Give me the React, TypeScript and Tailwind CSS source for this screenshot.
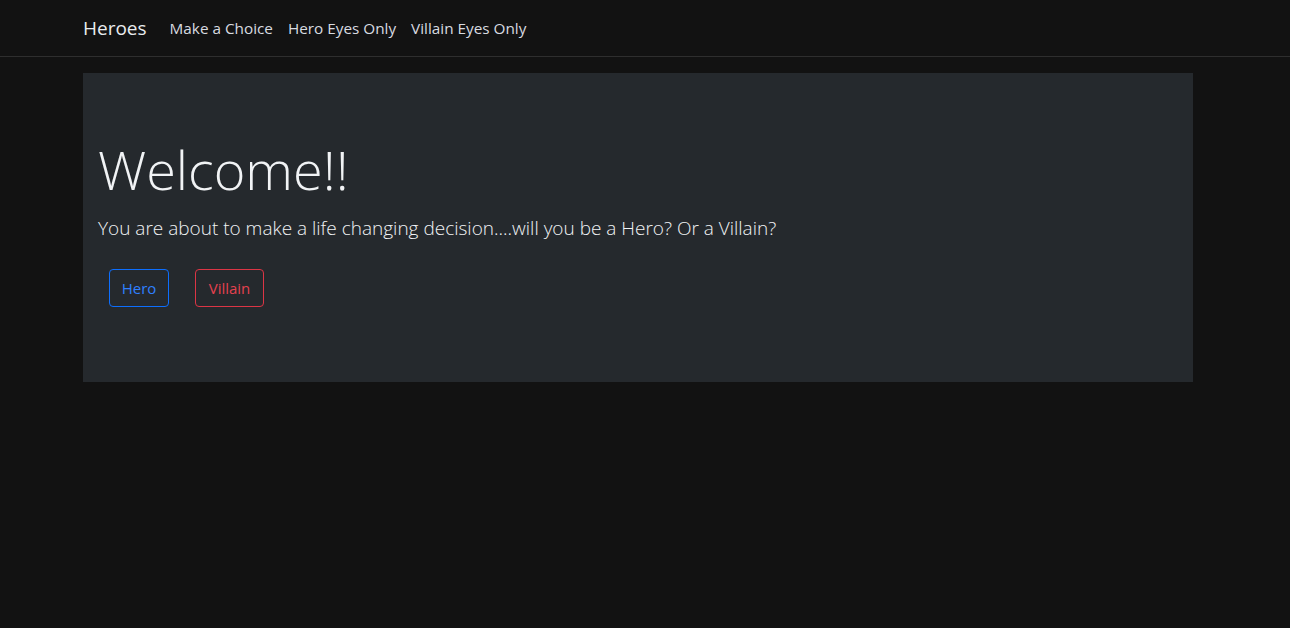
import React from 'react';

export default function App() {
  const links = ['Make a Choice', 'Hero Eyes Only', 'Villain Eyes Only'];

  return (
    <div className="min-h-screen bg-[#121212] font-['Open_Sans',sans-serif] text-[#dee2e6]">
      {/* Navbar */}
      <nav className="h-[57px] border-b border-[#2e2e2e]">
        <div className="ml-[83px] flex h-14 items-center">
          <a className="mr-[23px] text-[19px] text-[#e9ecef]">Heroes</a>
          <ul className="flex gap-[15px] text-[15.3px]">
            {links.map((l) => (
              <li key={l}>
                <a className="text-[#d8dbe0]">{l}</a>
              </li>
            ))}
          </ul>
        </div>
      </nav>

      {/* Jumbotron */}
      <div className="ml-[83px] mt-4 h-[309px] w-[1110px] bg-[#25292d] px-[15px] pt-16">
        <h1 className="text-[54px] leading-[1.2] font-light text-[#f1f3f5]">Welcome!!</h1>
        <p className="mt-[12px] text-[19px] font-light text-[#f1f3f5]">
          You are about to make a life changing decision....will you be a Hero? Or a Villain?
        </p>
        <div className="mt-[27px] flex gap-[26px] pl-[11px]">
          <button className="h-[38px] w-[60px] rounded border border-[#0d6efd] text-[15px] text-[#2f80ff]">
            Hero
          </button>
          <button className="h-[38px] w-[69px] rounded border border-[#dc3545] text-[15px] text-[#e4414f]">
            Villain
          </button>
        </div>
      </div>
    </div>
  );
}
